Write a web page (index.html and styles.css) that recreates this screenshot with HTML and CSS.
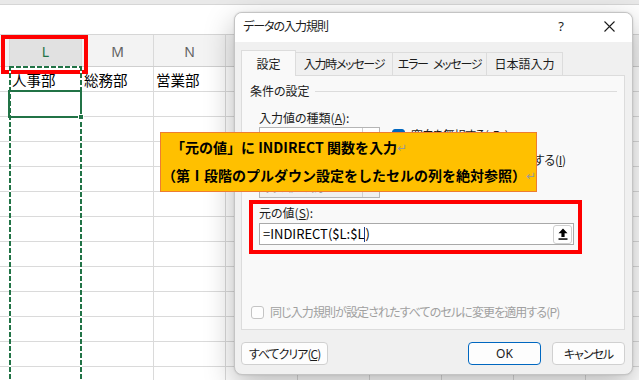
FILE: index.html
```html
<!DOCTYPE html>
<html lang="ja">
<head>
<meta charset="utf-8">
<title>データの入力規則</title>
<link rel="stylesheet" href="styles.css">
</head>
<body>
<div class="sheet">
  <div class="ribbon-edge"></div>
  <div class="formula-bar"></div>
  <div class="col-headers">
    <div class="ch"></div>
    <div class="ch ch-active">L</div>
    <div class="ch">M</div>
    <div class="ch">N</div>
    <div class="ch">O</div>
    <div class="ch">P</div>
    <div class="ch">Q</div>
    <div class="ch">R</div>
    <div class="ch">S</div>
    <div class="ch">T</div>
  </div>
  <div class="cells">
    <div class="cell"></div>
    <div class="cell">人事部</div>
    <div class="cell">総務部</div>
    <div class="cell">営業部</div>
  </div>
  <div class="hl-column"></div>
  <div class="marquee"></div>
  <div class="active-cell"><span class="fill-handle"></span></div>
</div>

<div class="dialog">
  <div class="titlebar">
    <span class="title kana">データの入力規則</span>
    <span class="tb-btn tb-help">?</span>
    <span class="tb-btn"><svg width="11" height="11" viewBox="0 0 11 11"><path d="M0.5 0.5 L10.5 10.5 M10.5 0.5 L0.5 10.5" stroke="#1b1b1b" stroke-width="1.1" fill="none"/></svg></span>
  </div>
  <div class="dlg-body">
    <div class="tabs">
      <div class="tab tab-active">設定</div>
      <div class="tab tab-w2 kana">入力時メッセージ</div>
      <div class="tab tab-w3 kana">エラー メッセージ</div>
      <div class="tab tab-w4">日本語入力</div>
    </div>
    <div class="panel">
      <div class="group-title"><span>条件の設定</span><i class="rule"></i></div>
      <div class="criteria">
        <div class="col-left">
          <div class="lbl">入力値の種類(<u>A</u>):</div>
          <div class="combo"><span class="combo-val kana">リスト</span><i class="combo-arrow"></i></div>
          <div class="lbl lbl-data kana">データ(<u>D</u>):</div>
          <div class="combo combo-disabled"><span class="combo-val">次の値の間</span><i class="combo-arrow"></i></div>
        </div>
        <div class="col-right">
          <div class="chk kana"><span class="box box-checked"><svg width="9" height="9" viewBox="0 0 9 9"><path d="M1.5 4.6 L3.6 6.7 L7.6 2.2" stroke="#fff" stroke-width="1.3" fill="none"/></svg></span>空白を無視する(<u>B</u>)</div>
          <div class="chk chk2"><span class="box box-checked"><svg width="9" height="9" viewBox="0 0 9 9"><path d="M1.5 4.6 L3.6 6.7 L7.6 2.2" stroke="#fff" stroke-width="1.3" fill="none"/></svg></span><span class="tight">ドロップダウン リストから選択</span>する(<u>I</u>)</div>
        </div>
      </div>
      <div class="source">
        <div class="lbl">元の値(<u>S</u>):</div>
        <div class="src-input">
          <span class="src-text">=INDIRECT($L:$L<span class="caret"></span>)</span>
          <span class="ref-btn"><svg width="10" height="12" viewBox="0 0 10 12"><path d="M5 0.5 L9.5 5.2 H6.6 V9 H3.4 V5.2 H0.5 Z" fill="#000"/><rect x="0.5" y="10.3" width="9" height="1.5" fill="#000"/></svg></span>
        </div>
      </div>
      <div class="chk chk-disabled"><span class="box"></span>同じ入力規則が設定されたすべてのセルに変更を適用する(P)</div>
    </div>
    <div class="buttons">
      <button class="btn btn-clear kana">すべてクリア(<u>C</u>)</button>
      <button class="btn btn-ok">OK</button>
      <button class="btn btn-cancel kana">キャンセル</button>
    </div>
  </div>
</div>

<div class="callout">
  <div class="cl1">「元の値」に INDIRECT 関数を入力<span class="ret">↵</span></div>
  <div class="cl2">（第Ⅰ段階のプルダウン設定をしたセルの列を絶対参照）<span class="ret">↵</span></div>
</div>
</body>
</html>
```

FILE: styles.css
```css
html, body {
  margin: 0;
  padding: 0;
}
body {
  width: 639px;
  height: 380px;
  overflow: hidden;
  position: relative;
  background: #fff;
  font-family: "Noto Sans CJK JP", "Noto Sans", sans-serif;
}

/* ---------- spreadsheet ---------- */
.sheet {
  position: relative;
  height: 380px;
}
.ribbon-edge {
  height: 4px;
  background: #e9e9e9;
  border-bottom: 1px solid #d6d6d6;
}
.formula-bar {
  height: 29px;
  background: #fff;
  border-bottom: 1px solid #d6d6d6;
}
.col-headers {
  display: grid;
  grid-template-columns: 9px repeat(9, 72px);
  height: 31px;
  background: #f3f3f3;
  border-bottom: 1px solid #cfcfcf;
}
.ch {
  border-left: 1px solid #d9d9d9;
  display: flex;
  align-items: center;
  justify-content: center;
  padding-top: 2px;
  font-family: "Noto Sans", "Open Sans", sans-serif;
  font-size: 14px;
  color: #616161;
}
.ch:first-child {
  border-left: none;
}
.ch-active {
  background: #e1e1e1;
  color: #217346;
}
.cells {
  display: grid;
  grid-template-columns: 9px repeat(9, 72px);
  grid-auto-rows: 25px;
  height: 313px;
  background-image:
    linear-gradient(to right, #dadada 1px, transparent 1px),
    linear-gradient(to bottom, transparent 24px, #dadada 24px);
  background-size: 72px 100%, 100% 25px;
  background-position: 9px 0, 0 0;
}
.cell {
  display: flex;
  align-items: center;
  padding-left: 3px;
  padding-top: 2px;
  font-size: 14.5px;
  line-height: 1;
  color: #000;
}
.hl-column {
  position: absolute;
  left: 1px;
  top: 35px;
  width: 87px;
  height: 39px;
  box-sizing: border-box;
  border: 4px solid #ff0000;
}
.marquee {
  position: absolute;
  left: 9px;
  top: 66px;
  width: 73px;
  height: 320px;
  background:
    repeating-linear-gradient(to right, #217346 0 5px, #fff 5px 7px) left top / 100% 2px no-repeat,
    repeating-linear-gradient(to bottom, #217346 0 5px, #fff 5px 7px) left top / 2px 100% no-repeat,
    repeating-linear-gradient(to bottom, #217346 0 5px, #fff 5px 7px) right top / 2px 100% no-repeat;
}
.active-cell {
  position: absolute;
  left: 8px;
  top: 90px;
  width: 74px;
  height: 28px;
  box-sizing: border-box;
  border: 2px solid #217346;
}
.fill-handle {
  position: absolute;
  right: -4px;
  bottom: -4px;
  width: 4px;
  height: 4px;
  background: #217346;
  border: 1px solid #fff;
}

/* ---------- dialog ---------- */
.dialog {
  position: absolute;
  left: 234px;
  top: 12px;
  width: 399px;
  height: 363px;
  box-sizing: border-box;
  border: 1px solid #c4c4c4;
  border-radius: 8px;
  background: #f0f0f0;
  overflow: hidden;
  box-shadow: 0 10px 30px rgba(0, 0, 0, 0.28), 0 0 2px rgba(0, 0, 0, 0.15);
  font-family: "Noto Sans CJK JP", sans-serif;
  font-size: 12px;
  color: #1b1b1b;
  font-feature-settings: "palt";
}
.kana {
  letter-spacing: -1px;
}
.titlebar {
  display: flex;
  align-items: center;
  height: 29px;
  background: #fff;
}
.title {
  flex: 1;
  padding-left: 8px;
  line-height: 16px;
  margin-top: -3px;
}
.tb-btn {
  width: 46px;
  height: 29px;
  display: flex;
  align-items: center;
  justify-content: center;
  margin-top: -3px;
}
.tb-help {
  font-family: "Noto Sans", sans-serif;
  font-size: 13px;
  padding-right: 4px;
  box-sizing: border-box;
}
.dlg-body {
  padding: 8px 7px 0 6px;
}
.tabs {
  display: flex;
  align-items: flex-end;
  height: 25px;
}
.tab {
  height: 23px;
  box-sizing: border-box;
  border: 1px solid #dcdcdc;
  border-bottom: none;
  background: #f0f0f0;
  display: flex;
  align-items: center;
  justify-content: center;
  margin-left: -1px;
  line-height: 16px;
}
.tab-active {
  width: 55px;
  height: 26px;
  margin-left: 0;
  margin-bottom: -1px;
  background: #f9f9f9;
  position: relative;
  z-index: 1;
}
.tab-w2 { width: 98px; }
.tab-w3 { width: 95px; word-spacing: 4px; }
.tab-w4 { width: 77px; }
.tab-w2, .tab-w3 {
  letter-spacing: -1.3px;
}
.panel {
  height: 255px;
  box-sizing: border-box;
  border: 1px solid #dcdcdc;
  background: #f9f9f9;
  padding: 7px 7px 0 0;
}
.group-title {
  display: flex;
  align-items: center;
  height: 16px;
  line-height: 16px;
  margin-left: 8px;
}
.rule {
  flex: 1;
  height: 1px;
  background: #dcdcdc;
  margin-left: 5px;
}
.criteria {
  display: flex;
  margin-top: 11px;
  margin-left: 17px;
}
.col-left {
  width: 121px;
}
.lbl {
  height: 16px;
  line-height: 16px;
}
.combo {
  display: flex;
  margin-top: 1px;
  height: 21px;
  box-sizing: border-box;
  border: 1px solid #b5b5b5;
  background: #fff;
}
.combo-val {
  flex: 1;
  padding-left: 4px;
  line-height: 19px;
}
.combo-arrow {
  width: 16px;
  border-left: 1px solid #d0d0d0;
}
.lbl-data {
  margin-top: 4px;
}
.combo-disabled {
  margin-top: 8px;
  height: 22px;
  background: #f0f0f0;
  color: #a0a0a0;
}
.col-right {
  margin-left: 12px;
  padding-top: 17px;
}
.chk {
  display: flex;
  align-items: center;
  gap: 5px;
  height: 16px;
  line-height: 16px;
  white-space: nowrap;
}
.chk .box {
  margin-right: 1px;
}
.chk2 {
  margin-top: 9px;
  gap: 0;
  letter-spacing: -0.2px;
}
.chk2 .box {
  margin-right: 6px;
}
.tight {
  letter-spacing: -2px;
}
.box {
  width: 13px;
  height: 13px;
  box-sizing: border-box;
  border: 1px solid #c4c4c4;
  border-radius: 3px;
  background: #fdfdfd;
  display: flex;
  align-items: center;
  justify-content: center;
  flex: none;
}
.box-checked {
  background: #0067c0;
  border-color: #0067c0;
}
.source {
  margin: 2px 0 0 7px;
  width: 333px;
  box-sizing: border-box;
  border: 4px solid #ff0000;
  padding: 1px 4px 5px 6px;
}
.src-input {
  display: flex;
  align-items: center;
  margin-top: 2px;
  height: 22px;
  box-sizing: border-box;
  border: 1px solid #a9a9a9;
  background: #fff;
  padding: 0 1px 0 3px;
}
.src-text {
  flex: 1;
  font-size: 13px;
  line-height: 16px;
  color: #000;
  font-feature-settings: normal;
}
.caret {
  display: inline-block;
  width: 0;
  height: 15px;
  border-left: 1px solid #1a3d8c;
  vertical-align: -3px;
}
.ref-btn {
  width: 19px;
  height: 19px;
  box-sizing: border-box;
  border: 1px solid #cfcfcf;
  border-radius: 3px;
  background: #fff;
  display: flex;
  align-items: center;
  justify-content: center;
}
.chk-disabled {
  margin: 50px 0 0 9px;
  color: #a0a0a0;
  letter-spacing: -0.9px;
}
.buttons {
  display: flex;
  margin-top: 12px;
}
.btn {
  height: 23px;
  box-sizing: border-box;
  border: 1px solid #d0d0d0;
  border-radius: 4px;
  background: #fdfdfd;
  padding: 0;
  font-family: inherit;
  font-size: 12px;
  font-feature-settings: "palt";
  color: #1b1b1b;
  line-height: 16px;
}
.btn-clear {
  width: 87px;
}
.btn-ok {
  width: 73px;
  margin-left: auto;
  border-color: #0067c0;
  font-family: "Noto Sans", sans-serif;
}
.btn-cancel {
  width: 73px;
  margin-left: 11px;
}

/* ---------- annotation callout ---------- */
.callout {
  position: absolute;
  left: 160px;
  top: 132px;
  width: 377px;
  height: 60px;
  box-sizing: border-box;
  border: 1px solid #ed7d31;
  background: #ffc000;
  padding-top: 1px;
  font-family: "Noto Sans CJK JP", sans-serif;
  font-weight: 700;
  font-size: 14px;
  line-height: 27px;
  color: #000;
  white-space: nowrap;
}
.cl1 {
  padding-left: 10px;
}
.cl2 {
  padding-left: 1px;
}
.ret {
  color: #9a9a9a;
  font-weight: 400;
  font-size: 12px;
  font-family: "DejaVu Sans", sans-serif;
  vertical-align: 1px;
}
```
